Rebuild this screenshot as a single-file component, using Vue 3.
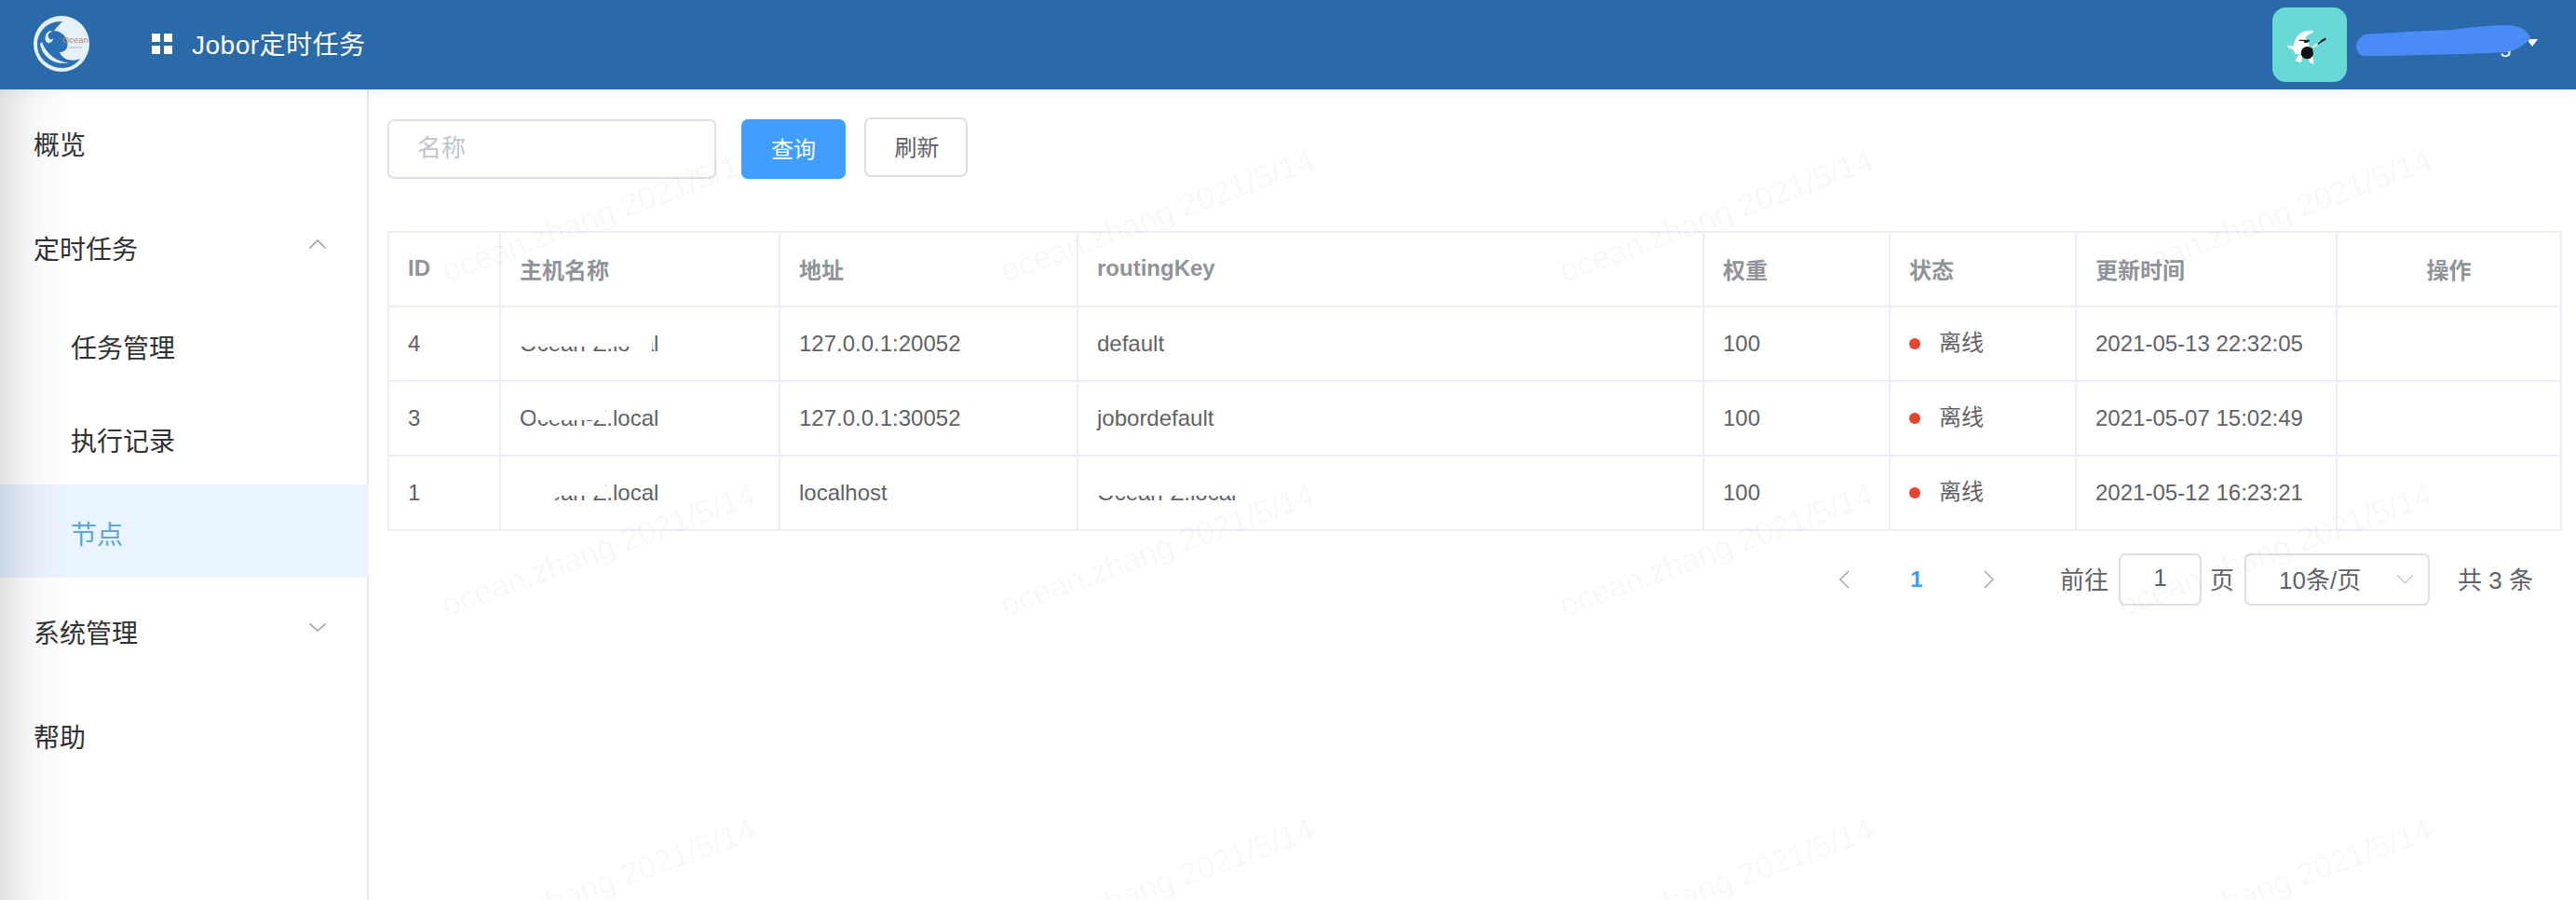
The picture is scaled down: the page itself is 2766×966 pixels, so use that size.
<script setup>
const columns = [
  { label: 'ID', width: 120 },
  { label: '主机名称', width: 300 },
  { label: '地址', width: 320 },
  { label: 'routingKey', width: 672 },
  { label: '权重', width: 200 },
  { label: '状态', width: 200 },
  { label: '更新时间', width: 280 },
  { label: '操作', width: 241, center: true }
]
const rows = [
  { id: 4, host: 'a', addr: '127.0.0.1:20052', key: 'default', time: '2021-05-13 22:32:05' },
  { id: 3, host: 'b', addr: '127.0.0.1:30052', key: 'jobordefault', time: '2021-05-07 15:02:49' },
  { id: 1, host: 'c', addr: 'localhost', key: 'Ocean-Z.local', masked: true, time: '2021-05-12 16:23:21' }
]
const marks = Array.from({ length: 12 }, (_, i) => i)
</script>

<template>
  <div class="app">
    <header class="top">
      <svg class="logo" viewBox="0 0 60 60" role="img" aria-label="Ocean">
        <circle cx="30" cy="30" r="30" fill="#e6f0f8" />
        <path d="M31 6C15 5 4 17 4 31C4 45 16 56 31 56C39 56 46 52 50 46C41 50 31 47 28 39C35 39 38 33 36 27C34 20 28 16 22 16C25 12 28 9 31 6Z" fill="#2b6fb4" />
        <path d="M7 30C9 43 22 54 38 50C26 50 14 42 9 28Z" fill="#e6f0f8" />
        <path d="M13 27C11 20 16 14 21 17C17 17 15 20 16 23C17 26 20 26 21 24C21 29 15 31 13 27Z" fill="#e6f0f8" />
        <text x="31" y="29" class="logo-word">Ocean</text>
        <path d="M38 34h14" stroke="#a9b9c8" stroke-width="1" />
      </svg>
      <div class="brand">
        <svg class="grid-icon" viewBox="0 0 22 22"><path d="M0 0h9v9H0zM13 0h9v9h-9zM0 13h9v9H0zM13 13h9v9h-9z" fill="#fff" /></svg>
        <span>Jobor定时任务</span>
      </div>
      <div class="user">
        <svg class="avatar" viewBox="0 0 240 240" role="img" aria-label="avatar">
          <rect width="240" height="240" rx="44" fill="#69d9d7" />
          <path d="M72 150C64 120 72 92 96 80C108 74 124 72 133 77C124 86 108 88 106 100C118 104 122 124 116 150Z" fill="#fff" />
          <path d="M76 125L48 122L52 130L78 142ZM84 152L74 172L92 178L98 156ZM114 152L120 178L134 182L128 152Z" fill="#fff" />
          <circle cx="112" cy="146" r="20" fill="#111" />
          <path d="M120 138L160 108" stroke="#111" stroke-width="4" />
          <path d="M156 110L172 100" stroke="#111" stroke-width="6" />
          <path d="M86 104h34v4l-8 6h-8l-4-6h-14z" fill="#222" />
          <path d="M128 130L146 118" stroke="#fff" stroke-width="6" />
        </svg>
        <div class="name">
          <span>ocean.zhang</span>
          <svg class="scribble" viewBox="0 0 187 33"><path d="M0 23C0 17 5 13 8 10C40 8 70 6 103 5C125 2 145 0 165 0C178 1 187 8 187 15C180 22 172 27 160 29C130 31 100 31 70 32C45 33 25 33 7 33C3 31 0 27 0 23Z" fill="#4a8bf6" /></svg>
        </div>
        <i class="caret"></i>
      </div>
    </header>

    <div class="body">
      <aside class="side">
        <div class="item">概览</div>
        <div class="item between">定时任务
          <svg class="chev" viewBox="0 0 18 10"><path d="M0.5 9.5L9 1L17.5 9.5" /></svg>
        </div>
        <div class="sub">任务管理</div>
        <div class="sub">执行记录</div>
        <div class="sub active">节点</div>
        <div class="item between">系统管理
          <svg class="chev" viewBox="0 0 18 10"><path d="M0.5 0.5L9 8L17.5 0.5" /></svg>
        </div>
        <div class="item">帮助</div>
      </aside>

      <main class="main">
        <div class="toolbar">
          <input class="search" type="text" placeholder="名称" />
          <button class="btn primary">查询</button>
          <button class="btn plain">刷新</button>
        </div>

        <table class="table">
          <colgroup>
            <col v-for="c in columns" :key="c.label" :style="{ width: c.width + 'px' }" />
          </colgroup>
          <thead>
            <tr>
              <th v-for="c in columns" :key="c.label" :class="{ center: c.center }">{{ c.label }}</th>
            </tr>
          </thead>
          <tbody>
            <tr v-for="r in rows" :key="r.id">
              <td>{{ r.id }}</td>
              <td><span class="host" :class="'host-' + r.host">Ocean-Z.local<i class="patch p1"></i><i class="patch p2"></i></span></td>
              <td>{{ r.addr }}</td>
              <td><span class="host" :class="{ 'host-key': r.masked }">{{ r.key }}<i v-if="r.masked" class="patch p1"></i></span></td>
              <td>100</td>
              <td><span class="status"><i class="dot"></i>离线</span></td>
              <td>{{ r.time }}</td>
              <td></td>
            </tr>
          </tbody>
        </table>

        <div class="pager">
          <span class="nav"><svg viewBox="0 0 12 20"><path d="M11 1L2 10L11 19" /></svg></span>
          <span class="nav current">1</span>
          <span class="nav"><svg viewBox="0 0 12 20"><path d="M1 1L10 10L1 19" /></svg></span>
          <span class="goto">前往</span>
          <span class="page-box">1</span>
          <span class="page-unit">页</span>
          <span class="size-box">10条/页
            <svg viewBox="0 0 18 10"><path d="M0.5 0.5L9 9L17.5 0.5" /></svg>
          </span>
          <span class="total">共 3 条</span>
        </div>
      </main>
    </div>

    <div class="marks" aria-hidden="true">
      <div v-for="m in marks" :key="m" class="mark"><span>ocean.zhang 2021/5/14</span></div>
    </div>
  </div>
</template>

<style scoped>
.app {
  position: relative;
  width: 2766px;
  height: 966px;
  overflow: hidden;
  background: #fff;
  color: #606266;
  font-family: "Liberation Sans", "Noto Sans CJK SC", sans-serif;
  display: flex;
  flex-direction: column;
}
.top {
  position: relative;
  z-index: 2;
  height: 96px;
  flex: none;
  background: #2b6aa9;
  box-shadow: 0 4px 14px rgba(43, 106, 169, .07);
  color: #fff;
  display: flex;
  align-items: center;
  padding: 0 41px 0 36px;
}
.logo { width: 60px; height: 60px; margin-top: -2px; flex: none; }
.logo-word { font-size: 9.4px; fill: #b58a7c; font-family: "Liberation Sans", sans-serif; }
.brand { display: flex; align-items: center; margin-left: 67px; font-size: 28px; letter-spacing: .5px; margin-top: -4px; }
.grid-icon { width: 22px; height: 22px; margin-right: 21px; margin-top: 2px; }
.user { margin-left: auto; display: flex; align-items: center; }
.avatar { width: 80px; height: 80px; display: block; }
.name { position: relative; margin-left: 40px; font-size: 24px; line-height: 32px; }
.scribble { position: absolute; left: -30px; top: -5px; width: 187px; height: 33px; }
.caret {
  margin: 0 0 0 16px;
  width: 0;
  height: 0;
  border-left: 6px solid transparent;
  border-right: 6px solid transparent;
  border-top: 8px solid #fff;
  margin-top: -4px;
}

.body { flex: 1; display: flex; min-height: 0; }
.side {
  width: 396px;
  flex: none;
  border-right: 2px solid #e4e7ed;
  box-sizing: border-box;
  background: linear-gradient(90deg, #e2e2e2 0, #f6f6f6 34px, #fff 72px);
  color: #303133;
  font-size: 28px;
}
.item {
  height: 112px;
  padding: 4px 36px 0;
  box-sizing: border-box;
  display: flex;
  align-items: center;
}
.between { justify-content: space-between; padding-right: 44px; }
.chev { width: 18px; height: 10px; margin-top: -8px; }
.chev path { fill: none; stroke: #909399; stroke-width: 1.3; }
.sub {
  height: 100px;
  padding: 3px 0 0 76px;
  box-sizing: border-box;
  display: flex;
  align-items: center;
}
.active {
  margin-right: -2px;
  color: #5ba4dc;
  background: linear-gradient(90deg, #ccd7e4 0, #e4edf7 36px, #eaf4fe 72px);
  position: relative;
}

.main { flex: 1; min-width: 0; padding: 32px 16px 0 20px; }
.toolbar { display: flex; align-items: flex-start; height: 64px; }
.search {
  width: 353px;
  height: 64px;
  box-sizing: border-box;
  border: 2px solid #dcdfe6;
  border-radius: 7px;
  padding: 0 30px 2px;
  font: 26px "Liberation Sans", "Noto Sans CJK SC", sans-serif;
  outline: none;
  background: #fff;
}
.search::placeholder { color: #c0c4cc; }
.btn {
  height: 64px;
  border-radius: 7px;
  box-sizing: border-box;
  font: 24px "Liberation Sans", "Noto Sans CJK SC", sans-serif;
  padding: 0 0 3px;
}
.primary { width: 112px; margin-left: 27px; border: 0; background: #409eff; color: #fff; }
.plain { width: 111px; margin: -2px 0 0 20px; border: 2px solid #dcdfe6; background: #fff; color: #606266; padding-left: 2px; }

.table {
  margin-top: 56px;
  width: 2333px;
  table-layout: fixed;
  border-collapse: collapse;
  font-size: 24px;
  background: transparent;
}
th, td {
  height: 80px;
  padding: 0 20px;
  box-sizing: border-box;
  border: 2px solid #ebeef5;
  text-align: left;
  white-space: nowrap;
}
th { color: #909399; font-weight: 700; padding-bottom: 2px; }
th.center { text-align: center; }
.host { position: relative; display: inline-block; }
.patch { position: absolute; background: #fff; display: none; }
.host-a .p1 { display: block; left: -4px; top: -2px; width: 146px; height: 19px; }
.host-a .p2 { display: block; left: 118px; top: 8px; width: 24px; height: 22px; }
.host-b .p1 { display: block; left: 17px; top: -2px; width: 75px; height: 18px; }
.host-c .p1 { display: block; left: -4px; top: -2px; width: 42px; height: 34px; }
.host-c .p2 { display: block; left: 36px; top: -2px; width: 56px; height: 19px; }
.host-key .p1 { display: block; left: -4px; top: -3px; width: 156px; height: 20px; }
.status { display: flex; align-items: center; line-height: 24px; margin-top: -3px; }
.dot { width: 12px; height: 12px; border-radius: 50%; background: #e5432a; margin-right: 20px; margin-top: 2px; }

.pager {
  margin-top: 24px;
  padding-right: 30px;
  display: flex;
  justify-content: flex-end;
  align-items: center;
  height: 56px;
  font-size: 26px;
}
.nav { width: 78px; display: flex; justify-content: center; align-items: center; }
.nav svg { width: 12px; height: 20px; }
.nav path { fill: none; stroke: #a8abb2; stroke-width: 1.6; }
.current { color: #409eff; font-weight: 700; font-size: 24px; }
.goto { margin-left: 37px; padding-bottom: 3px; }
.page-unit, .total { padding-bottom: 3px; }
.page-box, .size-box {
  height: 56px;
  box-sizing: border-box;
  border: 2px solid #dcdfe6;
  border-radius: 7px;
  display: flex;
  align-items: center;
  padding-bottom: 3px;
}
.page-box { width: 89px; margin-left: 11px; justify-content: center; }
.page-unit { margin-left: 9px; }
.size-box { width: 199px; margin-left: 11px; padding: 0 16px 3px 35px; justify-content: space-between; }
.size-box svg { width: 17px; height: 10px; margin-top: 3px; }
.size-box path { fill: none; stroke: #c0c4cc; stroke-width: 1.4; }
.total { margin-left: 30px; }

.marks {
  position: absolute;
  left: 343px;
  top: 52px;
  width: 2400px;
  display: grid;
  grid-template-columns: repeat(4, 600px);
  grid-auto-rows: 359px;
  pointer-events: none;
  z-index: 1;
}
.mark { display: flex; align-items: center; justify-content: center; }
.mark span {
  font-size: 34px;
  color: rgba(144, 147, 153, .07);
  transform: rotate(-20deg);
  white-space: nowrap;
}
</style>
